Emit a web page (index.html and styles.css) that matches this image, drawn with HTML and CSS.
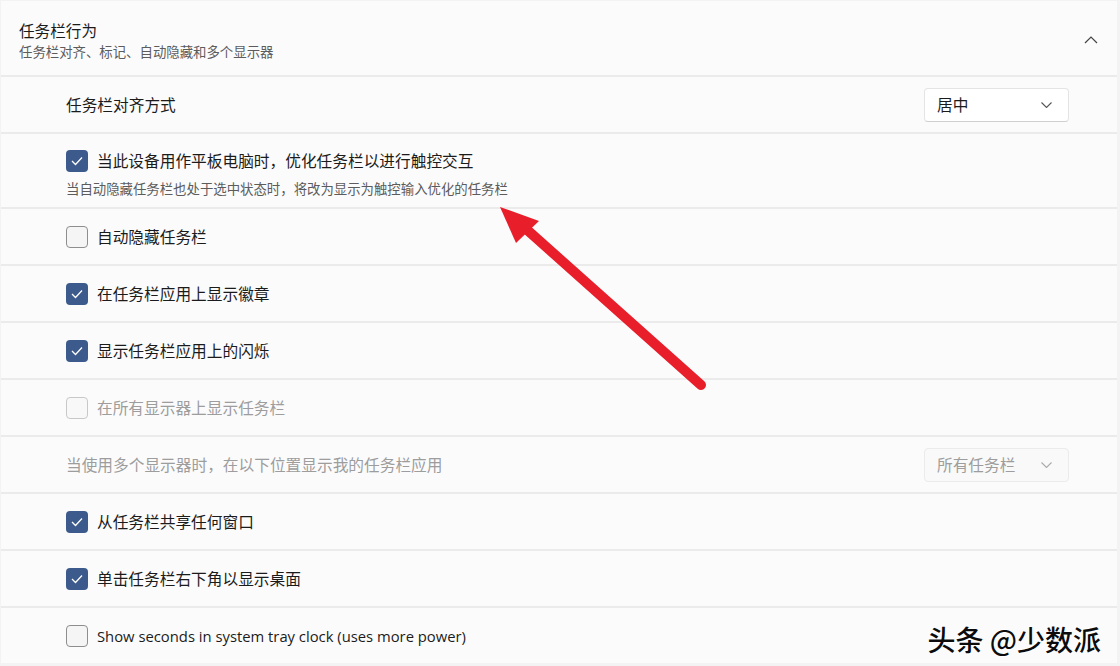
FILE: index.html
```html
<!DOCTYPE html>
<html lang="zh-CN">
<head>
  <meta charset="UTF-8">
  <title>任务栏行为</title>
  <link rel="stylesheet" href="styles.css">
</head>
<body>
  <div class="panel">
    <div class="header">
      <div class="header-text">
        <div class="title">任务栏行为</div>
        <div class="subtitle">任务栏对齐、标记、自动隐藏和多个显示器</div>
      </div>
      <svg class="chevron-up" width="14" height="8" viewBox="0 0 14 8"><path d="M1 7 L7 1 L13 7" fill="none" stroke="#444" stroke-width="1.2"/></svg>
    </div>

    <div class="row">
      <div class="label">任务栏对齐方式</div>
      <div class="select">
        <span>居中</span>
        <svg width="11" height="6" viewBox="0 0 11 6"><path d="M0.5 0.5 L5.5 5.5 L10.5 0.5" fill="none" stroke="#555" stroke-width="1.1"/></svg>
      </div>
    </div>

    <div class="row tall">
      <div class="stack">
        <div class="check-line">
          <span class="box checked"><svg width="12" height="10" viewBox="0 0 12 10"><path d="M1 5 L4.5 8.5 L11 1.5" fill="none" stroke="#fff" stroke-width="1.3"/></svg></span>
          <span class="label">当此设备用作平板电脑时，优化任务栏以进行触控交互</span>
        </div>
        <div class="desc">当自动隐藏任务栏也处于选中状态时，将改为显示为触控输入优化的任务栏</div>
      </div>
    </div>

    <div class="row">
      <div class="check-line">
        <span class="box"></span>
        <span class="label">自动隐藏任务栏</span>
      </div>
    </div>

    <div class="row">
      <div class="check-line">
        <span class="box checked"><svg width="12" height="10" viewBox="0 0 12 10"><path d="M1 5 L4.5 8.5 L11 1.5" fill="none" stroke="#fff" stroke-width="1.3"/></svg></span>
        <span class="label">在任务栏应用上显示徽章</span>
      </div>
    </div>

    <div class="row">
      <div class="check-line">
        <span class="box checked"><svg width="12" height="10" viewBox="0 0 12 10"><path d="M1 5 L4.5 8.5 L11 1.5" fill="none" stroke="#fff" stroke-width="1.3"/></svg></span>
        <span class="label">显示任务栏应用上的闪烁</span>
      </div>
    </div>

    <div class="row">
      <div class="check-line disabled">
        <span class="box"></span>
        <span class="label">在所有显示器上显示任务栏</span>
      </div>
    </div>

    <div class="row">
      <div class="label disabled-text">当使用多个显示器时，在以下位置显示我的任务栏应用</div>
      <div class="select disabled">
        <span>所有任务栏</span>
        <svg width="11" height="6" viewBox="0 0 11 6"><path d="M0.5 0.5 L5.5 5.5 L10.5 0.5" fill="none" stroke="#aaa" stroke-width="1.1"/></svg>
      </div>
    </div>

    <div class="row">
      <div class="check-line">
        <span class="box checked"><svg width="12" height="10" viewBox="0 0 12 10"><path d="M1 5 L4.5 8.5 L11 1.5" fill="none" stroke="#fff" stroke-width="1.3"/></svg></span>
        <span class="label">从任务栏共享任何窗口</span>
      </div>
    </div>

    <div class="row">
      <div class="check-line">
        <span class="box checked"><svg width="12" height="10" viewBox="0 0 12 10"><path d="M1 5 L4.5 8.5 L11 1.5" fill="none" stroke="#fff" stroke-width="1.3"/></svg></span>
        <span class="label">单击任务栏右下角以显示桌面</span>
      </div>
    </div>

    <div class="row">
      <div class="check-line">
        <span class="box"></span>
        <span class="label latin">Show seconds in system tray clock (uses more power)</span>
      </div>
    </div>
  </div>

  <!-- annotation arrow drawn over the screenshot -->
  <svg class="arrow" width="1120" height="666" viewBox="0 0 1120 666">
    <line x1="701" y1="385" x2="525" y2="228" stroke="#e81e2a" stroke-width="10" stroke-linecap="round"/>
    <polygon points="500,207 539,221 516,243" fill="#e81e2a"/>
  </svg>

  <div class="watermark">头条 @少数派</div>
</body>
</html>
```

FILE: styles.css
```css
body {
  margin: 0;
  width: 1120px;
  height: 666px;
  overflow: hidden;
  background-color: #f3f3f3;
  font-family: "Noto Sans CJK SC", "Noto Sans", sans-serif;
  color: #1b1b1b;
  position: relative;
}

.panel {
  width: 1116px;
  margin: 1px 0 0 1px;
  display: flex;
  flex-direction: column;
  gap: 2px;
  background-color: #ebebeb;
}

.header {
  height: 74px;
  background-color: #fbfbfc;
  display: flex;
  align-items: center;
  justify-content: space-between;
  padding: 0 19px 0 18px;
  box-sizing: border-box;
}

.header-text {
  display: flex;
  flex-direction: column;
  margin-top: 3px;
}

.title {
  font-size: 15.6px;
  line-height: normal;
}

.subtitle {
  font-size: 13.4px;
  line-height: normal;
  color: #5c5c5c;
}

.chevron-up {
  margin-top: 4px;
}

.row {
  height: 55px;
  background-color: #fbfbfc;
  display: flex;
  align-items: center;
  justify-content: space-between;
  padding: 0 48px 0 65px;
  box-sizing: border-box;
}

.row.tall {
  height: 73px;
}

.stack {
  display: flex;
  flex-direction: column;
  gap: 8px;
  margin-top: 5px;
}

.label {
  font-size: 15.7px;
  line-height: 20px;
}

.label.latin {
  font-family: "Open Sans", "Noto Sans", sans-serif;
  font-size: 14.8px;
}

.desc {
  font-size: 13.4px;
  line-height: 17px;
  color: #5c5c5c;
}

.check-line {
  display: flex;
  align-items: center;
  gap: 9px;
}

.box {
  width: 22px;
  height: 22px;
  box-sizing: border-box;
  border: 1px solid #8e8e8e;
  border-radius: 4px;
  background-color: #f5f5f5;
  display: flex;
  align-items: center;
  justify-content: center;
}

.box.checked {
  border: none;
  background-color: #3c5a8b;
}

.check-line.disabled .box {
  border-color: #c8c8c8;
  background-color: #f8f8f8;
}

.check-line.disabled .label,
.disabled-text {
  color: #9d9d9d;
}

.select {
  width: 145px;
  height: 34px;
  box-sizing: border-box;
  background-color: #ffffff;
  border: 1px solid #e4e4e4;
  border-bottom-color: #cfcfcf;
  border-radius: 4px;
  display: flex;
  align-items: center;
  justify-content: space-between;
  padding: 0 16px 0 12px;
  font-size: 15.7px;
}

.select.disabled {
  background-color: #f9f9f9;
  border-color: #ebebeb;
  color: #9d9d9d;
}

.arrow {
  position: absolute;
  left: 0;
  top: 0;
  pointer-events: none;
}

.watermark {
  position: absolute;
  right: 19px;
  bottom: 10px;
  font-size: 28px;
  font-weight: 500;
  line-height: 34px;
  color: #0c0c0c;
  text-shadow: 1px 1px 0 #fff, -1px -1px 0 #fff;
}
```
